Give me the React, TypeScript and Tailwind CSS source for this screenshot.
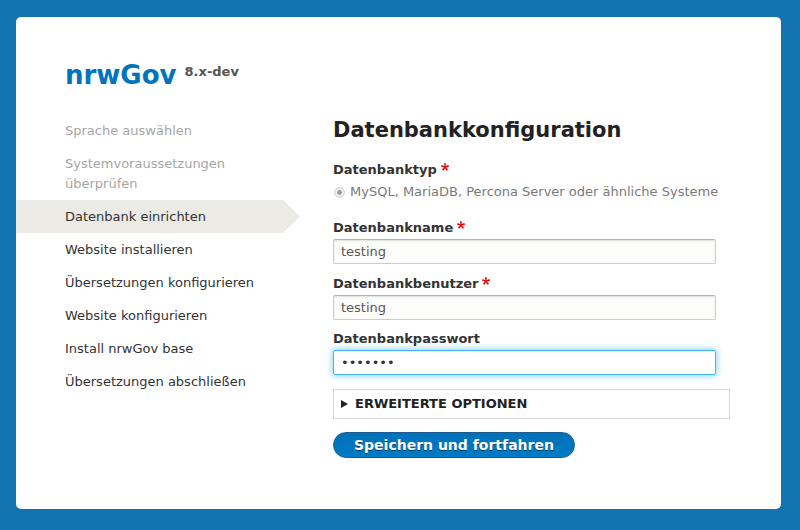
const steps = [
  { label: "Sprache auswählen", state: "done" },
  { label: "Systemvoraussetzungen überprüfen", state: "done" },
  { label: "Datenbank einrichten", state: "active" },
  { label: "Website installieren", state: "todo" },
  { label: "Übersetzungen konfigurieren", state: "todo" },
  { label: "Website konfigurieren", state: "todo" },
  { label: "Install nrwGov base", state: "todo" },
  { label: "Übersetzungen abschließen", state: "todo" },
];

function Required() {
  return (
    <svg
      className="ml-[4px] mt-[3px] h-[8px] w-[8px] self-start"
      viewBox="0 0 16 16"
      aria-hidden
    >
      <path
        fill="#e00"
        d="M0,7.562l1.114-3.438c2.565,0.906,4.43,1.688,5.59,2.35C6.398,3.553,6.237,1.544,6.22,0.447h3.511c-0.05,1.597-0.234,3.6-0.558,6.003c1.664-0.838,3.566-1.613,5.714-2.325L16,7.562c-2.05,0.678-4.06,1.131-6.028,1.356c0.984,0.856,2.372,2.381,4.166,4.575l-2.906,2.059c-0.935-1.274-2.041-3.009-3.316-5.206c-1.194,2.275-2.244,4.013-3.147,5.206l-2.856-2.059c1.872-2.307,3.211-3.832,4.017-4.575C3.849,8.516,1.872,8.062,0,7.562"
      />
    </svg>
  );
}

function Label({ text, required }: { text: string; required?: boolean }) {
  return (
    <div className="flex items-start text-[13px] font-bold leading-[20px] text-[#333]">
      <span>{text}</span>
      {required && <Required />}
    </div>
  );
}

function TextField({ value }: { value: string }) {
  return (
    <input
      readOnly
      value={value}
      className="mt-[1px] block h-[25px] w-[383px] rounded-[2px] border border-[#ccc] border-t-[#b4b4b4] bg-[#fcfcfa] px-[7px] text-[13px] text-[#595959] shadow-[inset_0_1px_2px_rgba(0,0,0,0.12)] outline-none"
    />
  );
}

export default function App() {
  return (
    <div
      className="h-[530px] w-[800px] overflow-hidden bg-[#1373b1] pl-[16px] pt-[17px]"
      style={{ fontFamily: "'DejaVu Sans', 'Liberation Sans', sans-serif" }}
    >
      <div className="h-[492px] w-[765px] rounded-[5px] bg-white pt-[43px]">
        <div className="flex items-start pl-[49px]">
          <span className="text-[26px] font-bold leading-[31px] text-[#0074bd]">
            nrwGov
          </span>
          <span className="ml-[8px] mt-[2px] text-[13px] font-bold leading-[20px] text-[#555]">
            8.x-dev
          </span>
        </div>

        <div className="mt-[23px] flex">
          <ul className="w-[267px] shrink-0">
            {steps.map((s) => (
              <li
                key={s.label}
                className={
                  s.state === "active"
                    ? "relative bg-[#ebeae4] py-[6.5px] pl-[49px] text-[13px] leading-[20px] text-[#333]"
                    : s.state === "done"
                      ? "py-[6.5px] pl-[49px] pr-[30px] text-[13px] leading-[20px] text-[#a6a6a6]"
                      : "py-[6.5px] pl-[49px] text-[13px] leading-[20px] text-[#333]"
                }
              >
                {s.label}
                {s.state === "active" && (
                  <svg
                    className="absolute left-full top-0 h-full w-[17px]"
                    viewBox="0 0 17 33"
                    preserveAspectRatio="none"
                  >
                    <polygon points="0,0 17,16.5 0,33" fill="#ebeae4" />
                  </svg>
                )}
              </li>
            ))}
          </ul>

          <div className="ml-[50px] pt-[4px]">
            <h1 className="text-[21px] font-bold leading-[25px] text-[#222]">
              Datenbankkonfiguration
            </h1>

            <div className="mt-[17px]">
              <Label text="Datenbanktyp" required />
              <div className="mt-[2px] flex items-center text-[13px] leading-[20px] text-[#7a7a7a]">
                <svg className="ml-[1px] mr-[5px] h-[11px] w-[11px]" viewBox="0 0 11 11">
                  <circle cx="5.5" cy="5.5" r="4.8" fill="#f2f2f2" stroke="#c9c9c9" />
                  <circle cx="5.5" cy="5.5" r="2.4" fill="#9a9a9a" />
                </svg>
                MySQL, MariaDB, Percona Server oder ähnliche Systeme
              </div>
            </div>

            <div className="mt-[16px]">
              <Label text="Datenbankname" required />
              <TextField value="testing" />
            </div>

            <div className="mt-[9.5px]">
              <Label text="Datenbankbenutzer" required />
              <TextField value="testing" />
            </div>

            <div className="mt-[9.5px]">
              <Label text="Datenbankpasswort" />
              <input
                readOnly
                type="password"
                value="1234567"
                className="mt-[1px] block h-[25px] w-[383px] rounded-[2px] border border-[#40b6ff] bg-white px-[7px] text-[13px] text-[#333] shadow-[0_0_6px_1px_rgba(64,182,255,0.6)] outline-none"
              />
            </div>

            <div className="mt-[13.5px] flex h-[30px] w-[397px] items-center border border-[#d4d4d4] pl-[7px]">
              <svg className="h-[8px] w-[7px]" viewBox="0 0 7 8">
                <polygon points="0,0 7,4 0,8" fill="#222" />
              </svg>
              <span className="ml-[7px] text-[13px] font-bold uppercase leading-[20px] text-[#222]">
                Erweiterte Optionen
              </span>
            </div>

            <button className="mt-[13px] h-[26px] rounded-full border border-[#1e5c90] bg-gradient-to-t from-[#007bc6] to-[#0071b8] px-[20px] text-[14px] font-bold leading-[16px] text-white [text-shadow:0_1px_rgba(0,0,0,0.5)]">
              Speichern und fortfahren
            </button>
          </div>
        </div>
      </div>
    </div>
  );
}
